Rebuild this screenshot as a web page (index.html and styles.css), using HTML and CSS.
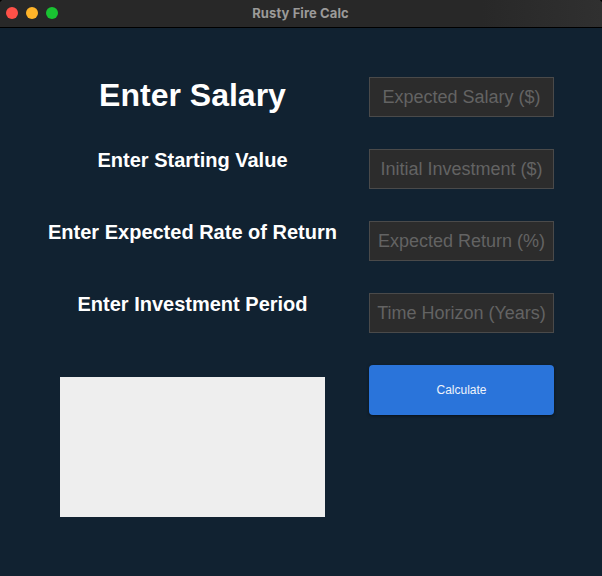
FILE: index.html
```html
<!DOCTYPE html>
<html lang="en">
<head>
<meta charset="utf-8">
<title>Rusty Fire Calc</title>
<link rel="stylesheet" href="styles.css">
</head>
<body>
<header class="titlebar">
  <div class="lights"><span class="light close"></span><span class="light minimize"></span><span class="light expand"></span></div>
  <div class="title">Rusty Fire Calc</div>
</header>
<main class="content">
  <section class="labels">
    <h1 class="heading">Enter Salary</h1>
    <h2 class="label">Enter Starting Value</h2>
    <h2 class="label">Enter Expected Rate of Return</h2>
    <h2 class="label">Enter Investment Period</h2>
    <div class="output"></div>
  </section>
  <form class="fields">
    <input class="field" type="text" placeholder="Expected Salary ($)">
    <input class="field" type="text" placeholder="Initial Investment ($)">
    <input class="field" type="text" placeholder="Expected Return (%)">
    <input class="field" type="text" placeholder="Time Horizon (Years)">
    <button class="calculate" type="button">Calculate</button>
  </form>
</main>
</body>
</html>
```
FILE: styles.css
```css
* { box-sizing: border-box; }
html { background: #000; }
body {
  margin: 0;
  height: 576px;
  overflow: hidden;
  background: #112231;
  color: #fff;
  font-family: "Liberation Sans", Arial, sans-serif;
}
.titlebar {
  display: grid;
  grid-template-columns: 1fr auto 1fr;
  align-items: center;
  height: 28px;
  padding: 0 7px 2px 6px;
  border-bottom: 1px solid #000;
  background:
    radial-gradient(circle at 100% 100%, transparent 4px, #000 4.5px) 0 0 / 4px 4px no-repeat,
    radial-gradient(circle at 0 100%, transparent 4px, #000 4.5px) 100% 0 / 4px 4px no-repeat,
    linear-gradient(90deg, #282828 0%, #282828 80%, #303030 100%);
}
.lights { display: flex; gap: 8px; }
.light { width: 12px; height: 12px; border-radius: 50%; }
.close { background: #ff5148; }
.minimize { background: #ffb429; }
.expand { background: #19c332; }
.title {
  color: #9b9a99;
  font: 700 13px/16px Inter, sans-serif;
  letter-spacing: 0.1px;
}
.content {
  display: grid;
  grid-template-columns: 289px 185px;
  column-gap: 32px;
  padding: 49px 48px 0;
}
.labels { display: flex; flex-direction: column; align-items: center; }
.heading, .label { margin: 0; font-weight: 700; white-space: nowrap; }
.heading { height: 72px; font-size: 32px; line-height: 37px; }
.label { height: 72px; font-size: 20px; line-height: 23px; }
.output { width: 265px; height: 140px; margin-top: 12px; background: #eee; }
.fields { display: flex; flex-direction: column; gap: 32px; }
.field {
  width: 185px;
  height: 40px;
  padding: 0;
  border: 1px solid #4a4a4a;
  border-radius: 0;
  outline: 0;
  background: #2c2c2c;
  color: #fff;
  font: 18px "Liberation Sans", Arial, sans-serif;
  text-align: center;
}
.field::placeholder { color: #636363; }
.calculate {
  width: 185px;
  height: 50px;
  padding: 0;
  border: 0;
  border-radius: 4px;
  background: #2a74da;
  color: #eef3fb;
  font: 12px "Liberation Sans", Arial, sans-serif;
  box-shadow: 0 1px 3px rgba(0, 0, 0, .5);
}
```
